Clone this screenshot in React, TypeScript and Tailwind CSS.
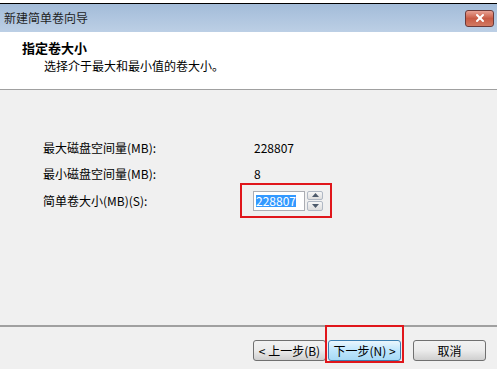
import { X } from "lucide-react";

const font = { fontFamily: '"Noto Sans CJK SC", "Liberation Sans", sans-serif' };

// small spinner arrow
function Arrow({ up }: { up?: boolean }) {
  return (
    <svg width="7" height="4" viewBox="0 0 7 4">
      <path d={up ? "M0 4 L3.5 0 L7 4 Z" : "M0 0 L3.5 4 L7 0 Z"} fill="#4d5a6b" />
    </svg>
  );
}

function WinButton({ label, active }: { label: string; active?: boolean }) {
  return (
    <button
      type="button"
      className={`flex h-[21px] w-[73px] items-center justify-center rounded-[3px] border text-[12px] leading-none text-black ${
        active
          ? "border-[#3c7fb1] bg-gradient-to-b from-[#eaf6fd] via-[#bee6fd] to-[#a7d9f5]"
          : "border-[#707070] bg-gradient-to-b from-[#f2f2f2] via-[#ebebeb] to-[#cfcfcf]"
      }`}
    >
      {label}
    </button>
  );
}

export default function App() {
  return (
    <div className="flex h-[369px] w-[497px] flex-col overflow-hidden bg-[#f0f0f0] text-black" style={font}>
      {/* window behind */}
      <div className="h-[4px] border-b border-black bg-white" />

      {/* title bar */}
      <div className="flex h-[28px] items-center justify-between bg-gradient-to-b from-[#a3bcd9] to-[#bccfe5] pl-[4px] pr-[3px]">
        <span className="text-[12px] text-[#1e1e1e]">新建简单卷向导</span>
        <div className="flex h-[17px] w-[29px] items-center justify-center rounded-[3px] border border-[#6b3a3a] bg-gradient-to-b from-[#e8a193] via-[#c85b45] to-[#d27a63]">
          <X size={12} strokeWidth={4} color="white" />
        </div>
      </div>

      {/* header */}
      <div className="h-[58px] border-b border-[#a0a0a0] bg-white pl-[22px] pt-[8px]">
        <div className="text-[13px] font-bold leading-[16px]">指定卷大小</div>
        <div className="pl-[22px] pt-[2px] text-[12px] leading-[16px]">选择介于最大和最小值的卷大小。</div>
      </div>

      {/* body */}
      <div className="flex-1 pl-[43px] pt-[45px]">
        <div className="grid grid-cols-[211px_1fr] items-center text-[12px] leading-none">
          <div className="flex h-[26px] items-center">最大磁盘空间量(MB):</div>
          <div className="flex h-[26px] items-center">228807</div>
          <div className="flex h-[26px] items-center">最小磁盘空间量(MB):</div>
          <div className="flex h-[26px] items-center">8</div>
          <div className="flex h-[27px] items-center">简单卷大小(MB)(S):</div>
          <div className="-my-[4px] -ml-[14px] flex h-[35px] w-[92px] items-center gap-[2px] border-2 border-[#e0161b] pl-[11px]">
            <div className="flex h-[20px] w-[52px] items-center border border-[#abadb3] bg-white px-[2px]">
              <span className="bg-[#3399ff] text-white">228807</span>
            </div>
            <div className="flex h-[20px] w-[16px] flex-col gap-px">
              <div className="flex flex-1 items-center justify-center rounded-[2px] border border-[#b0b8c4] bg-gradient-to-b from-[#f6f6f6] to-[#dedede]">
                <Arrow up />
              </div>
              <div className="flex flex-1 items-center justify-center rounded-[2px] border border-[#b0b8c4] bg-gradient-to-b from-[#f6f6f6] to-[#dedede]">
                <Arrow />
              </div>
            </div>
          </div>
        </div>
      </div>

      {/* footer */}
      <div className="h-[44px] border-t-2 border-[#a0a0a0] pt-[13px]">
        <div className="flex items-start pl-[253px]">
          <WinButton label="< 上一步(B)" />
          <div className="-mb-[2px] -ml-[1px] -mt-[15px] border-2 border-[#e0161b] px-[1px] pb-0 pt-[13px]">
            <WinButton label="下一步(N) >" active />
          </div>
          <div className="ml-[9px]">
            <WinButton label="取消" />
          </div>
        </div>
      </div>
    </div>
  );
}
